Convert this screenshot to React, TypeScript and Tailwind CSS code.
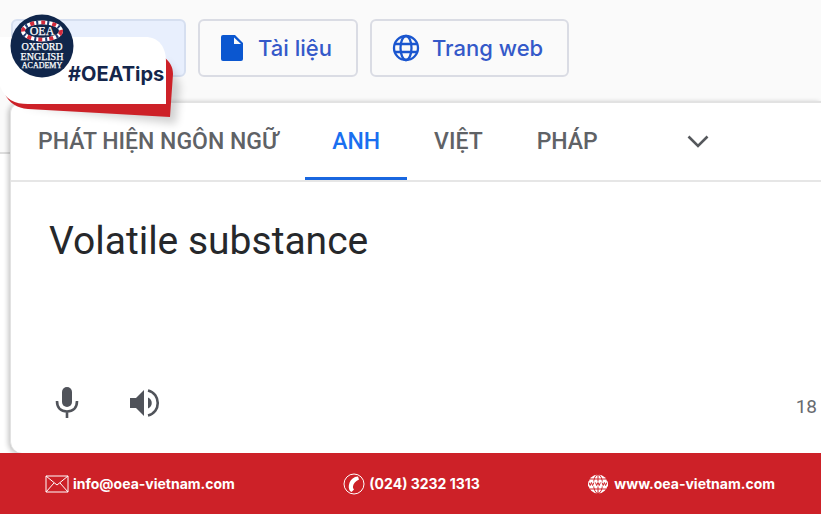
import type { ReactNode } from "react";

function ModeButton({ icon, label, width }: { icon: ReactNode; label: string; width: string }) {
  return (
    <button
      type="button"
      className={`flex h-[58px] shrink-0 items-center gap-3 rounded-md border-2 border-[#dadce4] pl-5 font-['Inter',sans-serif] text-[22px] font-medium text-[#3459c9] ${width}`}
    >
      {icon}
      {label}
    </button>
  );
}

function FileIcon() {
  return (
    <svg width="26" height="26" viewBox="0 0 26 26" aria-hidden="true">
      <path d="M3 0h12l8 8v16a2 2 0 0 1-2 2H3a2 2 0 0 1-2-2V2a2 2 0 0 1 2-2z" fill="#0b57d0" />
      <path d="M14 2.500l7 6.500h-7z" fill="#fafafa" />
    </svg>
  );
}

function GlobeIcon() {
  return (
    <svg width="28" height="28" viewBox="0 0 28 28" fill="none" stroke="#1a56cf" strokeWidth="2.3" aria-hidden="true">
      <circle cx="14" cy="14" r="12" />
      <ellipse cx="14" cy="14" rx="5.5" ry="12" />
      <path d="M3 10h22M3 18h22" />
    </svg>
  );
}

function Badge() {
  return (
    <aside className="absolute left-0 top-0 h-[140px] w-[190px]">
      <svg width="190" height="140" viewBox="0 0 190 140" className="absolute inset-0" aria-hidden="true">
        <defs>
          <filter id="soft" x="-20%" y="-20%" width="140%" height="150%">
            <feGaussianBlur stdDeviation="4" />
          </filter>
        </defs>
        <path d="M20 106L176 124L180 85L166 60V104z" fill="#000" opacity=".18" filter="url(#soft)" />
        <path d="M5 94C9 103 17 108 28 109L170 117L173 74C173 67 170 62 165 58L164 103H28C17 103 9 99 5 94z" fill="#cd2128" />
        <path d="M0 37H145C159 37 166 47 166 62V104H28C15 104 5 100 0 86z" fill="#fff" />
        <circle cx="42" cy="46" r="31.500" fill="#10264b" />
        <ellipse cx="42" cy="31" rx="19" ry="8.500" fill="none" stroke="#fff" strokeWidth="4" />
        <ellipse cx="42" cy="31" rx="19" ry="8.500" fill="none" stroke="#d22b3c" strokeWidth="4" strokeDasharray="4 7" />
        <ellipse cx="42" cy="31" rx="19" ry="8.500" fill="none" stroke="#1d3a72" strokeWidth="4" strokeDasharray="2 9" strokeDashoffset="-6" />
        <ellipse cx="42" cy="31" rx="16" ry="6.500" fill="#10264b" />
        <g fill="#fff" stroke="#fff" strokeWidth=".25" textAnchor="middle" fontFamily="Liberation Serif, serif">
          <text x="42" y="35" fontSize="12">OEA</text>
          <text x="42" y="50" fontSize="10">OXFORD</text>
          <text x="42" y="60" fontSize="10">ENGLISH</text>
          <text x="42" y="68" fontSize="8">ACADEMY</text>
        </g>
      </svg>
      <p className="absolute left-[68px] top-[62px] font-['Inter',sans-serif] text-[20px] leading-6 font-bold text-[#14264b]">
        #OEATips
      </p>
    </aside>
  );
}

function Tab({ label, active = false }: { label: string; active?: boolean }) {
  return (
    <button
      type="button"
      role="tab"
      aria-selected={active}
      className={`shrink-0 border-b-[3px] px-[27px] pt-1 ${active ? "border-[#1967e0] text-[#1a6ff0]" : "border-transparent text-[#5f6266]"}`}
    >
      {label}
    </button>
  );
}

function MailIcon() {
  return (
    <svg width="24" height="18" viewBox="0 0 24 18" fill="none" stroke="#fff" strokeWidth="1" aria-hidden="true">
      <path d="M1 1h22v16H1zM1 1l11 9L23 1M1 17l8-9M23 17l-8-9" />
    </svg>
  );
}

function PhoneIcon() {
  return (
    <svg width="22" height="22" viewBox="0 0 22 22" aria-hidden="true">
      <circle cx="11" cy="11" r="10" fill="none" stroke="#fff" strokeWidth="1" />
      <path d="M12 4l3-.5 1 3-2.500 1.500c-2.500 1.500-4 5-3.500 7l1 1.500-2.500 2.500C4 17 5 7 12 4z" fill="#fff" />
    </svg>
  );
}

function WebIcon() {
  return (
    <svg width="20" height="20" viewBox="0 0 20 20" aria-hidden="true">
      <circle cx="10" cy="10" r="9.500" fill="#fff" />
      <g fill="none" stroke="#cd2128" strokeWidth="1">
        <ellipse cx="10" cy="10" rx="4.500" ry="9.500" />
        <path d="M10 0v20M2 5h16M2 15h16" />
      </g>
      <path d="M0 7.500h20v5H0z" fill="#fff" />
      <path d="M1 8.500l1.200 3 1.200-3 1.200 3 1.200-3M7.500 8.500l1.200 3 1.300-3 1.200 3 1.200-3M14 8.500l1.200 3 1.200-3 1.200 3 1.200-3" fill="none" stroke="#cd2128" strokeWidth="1" />
    </svg>
  );
}

export default function App() {
  return (
    <div className="relative flex min-h-screen flex-col overflow-hidden bg-[#fafafa] font-['Roboto',sans-serif]">
      <header className="flex gap-3 pt-[19px] pb-6 pl-[11px]">
        <button type="button" aria-label="OEA" className="h-[58px] w-[175px] shrink-0 rounded-md border-2 border-[#d6dff0] bg-[#e8effd]" />
        <ModeButton icon={<FileIcon />} label="Tài liệu" width="w-[160px]" />
        <ModeButton icon={<GlobeIcon />} label="Trang web" width="w-[199px]" />
      </header>

      <main className="flex flex-1">
        <div className="mt-[51px] w-[10px] shrink-0 border-t-2 border-[#dddddd] bg-white" />
        <section className="flex min-w-0 flex-1 flex-col rounded-l-xl border-t-2 border-l border-[#e2e2e2] bg-white shadow-[-2px_1px_5px_rgba(0,0,0,0.22)]">
          <div role="tablist" className="flex h-[79px] border-b-2 border-[#e6e6e6] text-[23px] font-medium">
            <Tab label="PHÁT HIỆN NGÔN NGỮ" />
            <Tab label="ANH" active />
            <Tab label="VIỆT" />
            <Tab label="PHÁP" />
            <button type="button" aria-label="Ngôn ngữ khác" className="ml-[50px] shrink-0 px-3">
              <svg width="22" height="14" viewBox="0 0 22 14" fill="none" stroke="#55585c" strokeWidth="2.6" aria-hidden="true">
                <path d="M1.500 1.500L11 11l9.500-9.500" />
              </svg>
            </button>
          </div>
          <textarea
            aria-label="Văn bản nguồn"
            defaultValue="Volatile substance"
            className="w-full flex-1 resize-none px-[38px] pt-9 text-[39px] leading-[46px] text-[#26282b] outline-none"
          />
          <div className="flex items-center pr-1 pb-8 pl-11">
            <button type="button" aria-label="Giọng nói">
              <svg width="24" height="32" viewBox="0 0 24 32" aria-hidden="true">
                <rect x="7" y="0" width="10" height="20" rx="5" fill="#50535a" />
                <path d="M2 14c0 7 4 10.500 10 10.500S22 21 22 14M12 24v7" fill="none" stroke="#50535a" strokeWidth="2.600" />
              </svg>
            </button>
            <button type="button" aria-label="Nghe" className="ml-[50px]">
              <svg width="32" height="30" viewBox="0 0 32 30" aria-hidden="true">
                <path d="M1 10h6l8-8v26l-8-8H1zM19 9.500c5 2 5 9 0 11z" fill="#50535a" />
                <path d="M19 2.500c13 3 13 22 0 25" fill="none" stroke="#50535a" strokeWidth="2.600" />
              </svg>
            </button>
            <span className="ml-auto pt-2 text-[19px] text-[#686b70]">18</span>
          </div>
        </section>
      </main>

      <footer className="relative flex h-[61px] shrink-0 items-center justify-between bg-[#cd2128] pr-[46px] pl-[45px] font-['Inter',sans-serif] text-[14px] font-bold text-white">
        <a href="mailto:info@oea-vietnam.com" className="flex items-center gap-1">
          <MailIcon />
          info@oea-vietnam.com
        </a>
        <a href="tel:02432321313" className="flex items-center gap-1">
          <PhoneIcon />
          (024) 3232 1313
        </a>
        <a href="https://www.oea-vietnam.com" className="flex items-center gap-1.5">
          <WebIcon />
          www.oea-vietnam.com
        </a>
      </footer>

      <Badge />
    </div>
  );
}
